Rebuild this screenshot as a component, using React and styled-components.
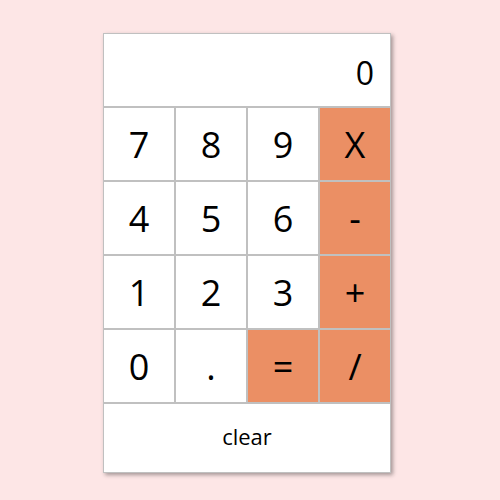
import React, { useState } from 'react'
import styled, { createGlobalStyle } from 'styled-components'

const GlobalStyle = createGlobalStyle`
    html, body {
        margin: 0;
        padding: 0;
        background: #fde6e6;
        font-family: "Open Sans", "Noto Sans", sans-serif;
    }
`

const Page = styled.div`
    width: 500px;
    height: 500px;
    display: flex;
    justify-content: center;
    padding-top: 33px;
    box-sizing: border-box;
    padding-right: 6px;
`

const Calculator = styled.div`
    width: 288px;
    height: 440px;
    box-sizing: border-box;
    border: 1px solid #c0c0c0;
    background: #c0c0c0;
    box-shadow: 2px 2px 4px rgba(0, 0, 0, 0.35);
    display: flex;
    flex-direction: column;
    gap: 2px;
`

const Display = styled.div`
    height: 72px;
    box-sizing: border-box;
    background: #fff;
    display: flex;
    align-items: center;
    justify-content: flex-end;
    padding: 5px 16px 0 0;
    font-size: 32px;
    color: #000;
`

const Keys = styled.div`
    display: grid;
    grid-template-columns: repeat(4, 70px);
    grid-auto-rows: 72px;
    gap: 2px;
`

const Key = styled.button`
    border: none;
    margin: 0;
    padding: 0;
    font-family: inherit;
    font-size: 36px;
    color: #000;
    background: ${props => (props.$op ? '#eb8f64' : '#fff')};
    display: flex;
    align-items: center;
    justify-content: center;
    cursor: pointer;
`

const Clear = styled.button`
    flex: 1;
    border: none;
    margin: 0;
    padding: 0 0 4px;
    background: #fff;
    font-family: inherit;
    font-size: 22px;
    color: #000;
    cursor: pointer;
`

const keys = [
    { label: '7' }, { label: '8' }, { label: '9' }, { label: 'X', op: true },
    { label: '4' }, { label: '5' }, { label: '6' }, { label: '-', op: true },
    { label: '1' }, { label: '2' }, { label: '3' }, { label: '+', op: true },
    { label: '0' }, { label: '.' }, { label: '=', op: true }, { label: '/', op: true },
]

function App() {
    const [value, setValue] = useState('0')
    return (
        <>
            <GlobalStyle />
            <Page>
                <Calculator>
                    <Display>{value}</Display>
                    <Keys>
                        {keys.map(item => (
                            <Key key={item.label} $op={item.op}>
                                {item.label}
                            </Key>
                        ))}
                    </Keys>
                    <Clear onClick={() => setValue('0')}>clear</Clear>
                </Calculator>
            </Page>
        </>
    )
}

export default App
